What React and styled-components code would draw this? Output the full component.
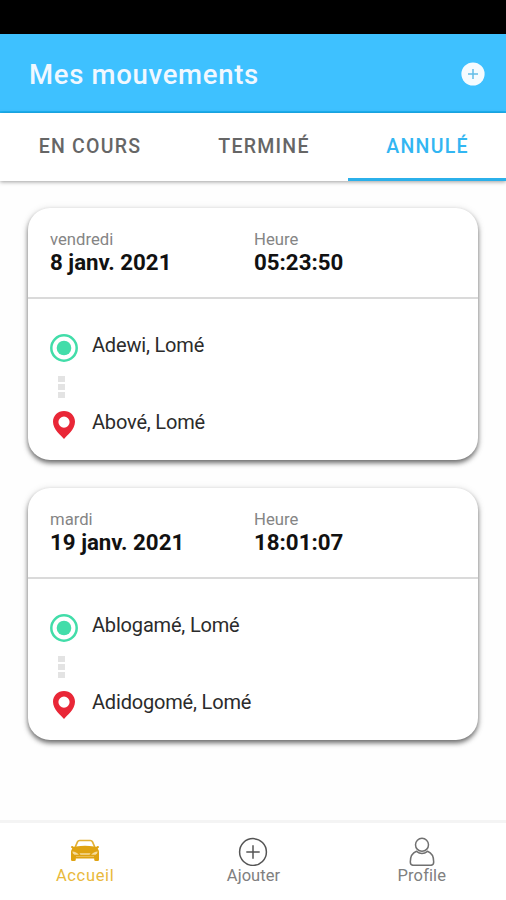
import React from "react";
import styled, { createGlobalStyle } from "styled-components";

const GlobalStyle = createGlobalStyle`
  * { box-sizing: border-box; }
  body { margin: 0; background: #fff; font-family: Roboto, "Liberation Sans", sans-serif; }
`;

const Screen = styled.div`
  display: flex;
  flex-direction: column;
  height: 900px;
  width: 506px;
  overflow: hidden;
  background: #fefefe;
`;

const StatusBar = styled.div`
  flex: none;
  height: 34px;
  background: #000;
`;

const Header = styled.header`
  flex: none;
  display: flex;
  align-items: center;
  justify-content: space-between;
  height: 79px;
  padding: 0 21px 0 29px;
  background: #3ec1ff;
  border-bottom: 2px solid #1db3f5;
`;

const Title = styled.h1`
  margin: 4px 0 0;
  font-size: 27.5px;
  font-weight: 500;
  line-height: 32px;
  letter-spacing: 0.7px;
  color: #f1f8ff;
`;

const AddButton = styled.button`
  display: flex;
  padding: 0;
  margin-top: 2px;
  border: 0;
  background: none;
`;

const Tabs = styled.nav`
  flex: none;
  display: grid;
  grid-template-columns: 179px 169px 158px;
  height: 68px;
  background: #fff;
  box-shadow: 0 1px 4px rgba(0, 0, 0, 0.38);
`;

const Tab = styled.a`
  display: flex;
  justify-content: center;
  padding: 22px 0 0 1px;
  font-size: 19.5px;
  font-weight: 500;
  line-height: 24px;
  letter-spacing: 1.25px;
  color: ${(p) => (p.$active ? "#32b6f2" : "#666")};
  border-bottom: 3px solid ${(p) => (p.$active ? "#2bb0ea" : "transparent")};
`;

const List = styled.main`
  flex: 1;
  display: flex;
  flex-direction: column;
  gap: 28px;
  padding: 27px 28px 0;
`;

const Card = styled.article`
  height: 252px;
  background: #fff;
  border-radius: 22px;
  box-shadow: 0 3px 5px rgba(0, 0, 0, 0.55), 0 1px 9px rgba(0, 0, 0, 0.1);
`;

const CardHead = styled.div`
  display: grid;
  grid-template-columns: 204px 1fr;
  height: 91px;
  padding: 22px 22px 0;
  border-bottom: 2px solid #dadada;
`;

const Label = styled.div`
  font-size: 16.7px;
  line-height: 19px;
  color: #858585;
`;

const Value = styled.div`
  font-size: 22.3px;
  font-weight: 700;
  line-height: 26px;
  color: #111;
`;

const Route = styled.div`
  display: flex;
  flex-direction: column;
  padding: 33px 22px 0;
`;

const Stop = styled.div`
  display: flex;
  align-items: flex-start;
  gap: 14px;
  height: 32px;

  svg { flex: none; margin-top: 2px; }
`;

const Place = styled.span`
  font-size: 20px;
  line-height: 26px;
  letter-spacing: -0.18px;
  color: #2b2b2b;
`;

const Dots = styled.div`
  display: flex;
  flex-direction: column;
  gap: 2px;
  height: 45px;
  padding: 12px 0 0 8px;
`;

const Dot = styled.i`
  width: 7px;
  height: 6px;
  background: #e3e3e3;
`;

const BottomNav = styled.nav`
  flex: none;
  display: grid;
  grid-template-columns: repeat(3, 1fr);
  height: 80px;
  padding-left: 1px;
  border-top: 3px solid #f4f4f4;
  background: #fff;
`;

const NavItem = styled.a`
  display: flex;
  flex-direction: column;
  align-items: center;
  padding-top: 14px;
  color: ${(p) => (p.$active ? "#e9b93c" : "#808080")};

  svg { display: block; }
`;

const NavLabel = styled.span`
  font-size: 16.5px;
  line-height: 20px;
  letter-spacing: ${(p) => p.$spacing};
`;

const AddIcon = () => (
  <svg width="24" height="24" viewBox="0 0 24 24">
    <circle cx="12" cy="12" r="11.6" fill="#f5fbff" />
    <path d="M12 7v10M7 12h10" stroke="#62bde8" strokeWidth="1.5" />
  </svg>
);

const OriginIcon = () => (
  <svg width="28" height="28" viewBox="0 0 28 28">
    <circle cx="14" cy="14" r="12.7" fill="none" stroke="#42dda9" strokeWidth="2.5" />
    <circle cx="14" cy="14" r="7.3" fill="#42dda9" />
  </svg>
);

const PinIcon = () => (
  <svg width="28" height="28" viewBox="0 0 28 28">
    <path
      fillRule="evenodd"
      fill="#e92737"
      d="M14 0C7.8 0 3 4.700 3 10.800 3 18.500 11 24.500 14 28c3-3.500 11-9.500 11-17.200C25 4.700 20.200 0 14 0Zm0 5.500a5.600 5.600 0 1 1 0 11.200 5.600 5.600 0 0 1 0-11.200Z"
    />
  </svg>
);

const CarIcon = () => (
  <svg width="30" height="29" viewBox="0 0 30 29">
    <path
      d="M5 10.500 7.500 4.900Q8.100 3.500 9.700 3.500h10.600q1.600 0 2.200 1.400L25 10.500"
      fill="none"
      stroke="#e3b136"
      strokeWidth="1.700"
    />
    <path
      fill="#dfa312"
      d="M6 9.500Q15 7.800 24 9.500l2 .4 1.500-.9q1.600.1 1.600 1.300l-1.400 1.300q1.300 1.500 1.300 3.500v7.700q0 1.300-1.300 1.300h-2q-1.500 0-1.500-1.300v-1.300H5.800v1.300q0 1.300-1.500 1.300h-2Q1 24.100 1 22.800v-7.700q0-2 1.300-3.500L.9 10.300Q.9 9.100 2.500 9l1.500.9Z"
    />
    <path d="M2.300 14.500q4.200.2 6.600 3.300H4.500q-2-1-2.200-3.300ZM27.700 14.500q-4.200.2-6.600 3.300h4.400q2-1 2.200-3.300ZM9.500 16.200h11l-1 1.500h-9Z" fill="#f5dc9d" />
    <path d="M6 19.500h18" stroke="#ebc365" strokeWidth="0.800" />
  </svg>
);

const PlusIcon = () => (
  <svg width="30" height="29" viewBox="0 0 30 29" fill="none" stroke="#555">
    <circle cx="15" cy="15" r="13.400" strokeWidth="1.500" />
    <path d="M15 8.300v13.400M8.300 15h13.400" strokeWidth="1.500" />
  </svg>
);

const ProfileIcon = () => (
  <svg width="30" height="29" viewBox="0 0 30 29" fill="none" stroke="#707070" strokeWidth="1.500">
    <circle cx="15" cy="7.800" r="6.500" />
    <path d="M9.500 14.300C5 16 3.300 20.500 3.300 25q0 3.300 3 3.300h17.400q3 0 3-3.300c0-4.500-1.700-9-6.200-10.700q-5.500 4.200-11 0Z" />
  </svg>
);

const trips = [
  { day: "vendredi", date: "8 janv. 2021", time: "05:23:50", from: "Adewi, Lomé", to: "Abové, Lomé" },
  { day: "mardi", date: "19 janv. 2021", time: "18:01:07", from: "Ablogamé, Lomé", to: "Adidogomé, Lomé" },
];

function TripCard({ trip }) {
  return (
    <Card>
      <CardHead>
        <div>
          <Label>{trip.day}</Label>
          <Value>{trip.date}</Value>
        </div>
        <div>
          <Label>Heure</Label>
          <Value>{trip.time}</Value>
        </div>
      </CardHead>
      <Route>
        <Stop><OriginIcon /><Place>{trip.from}</Place></Stop>
        <Dots><Dot /><Dot /><Dot /></Dots>
        <Stop><PinIcon /><Place>{trip.to}</Place></Stop>
      </Route>
    </Card>
  );
}

export default function App() {
  return (
    <>
      <GlobalStyle />
      <Screen>
        <StatusBar />
        <Header>
          <Title>Mes mouvements</Title>
          <AddButton aria-label="Ajouter"><AddIcon /></AddButton>
        </Header>
        <Tabs>
          <Tab>EN COURS</Tab>
          <Tab>TERMINÉ</Tab>
          <Tab $active>ANNULÉ</Tab>
        </Tabs>
        <List>
          {trips.map((trip) => <TripCard key={trip.date} trip={trip} />)}
        </List>
        <BottomNav>
          <NavItem $active><CarIcon /><NavLabel $spacing="0.65px">Accueil</NavLabel></NavItem>
          <NavItem><PlusIcon /><NavLabel $spacing="0.05px">Ajouter</NavLabel></NavItem>
          <NavItem><ProfileIcon /><NavLabel $spacing="0.1px">Profile</NavLabel></NavItem>
        </BottomNav>
      </Screen>
    </>
  );
}
